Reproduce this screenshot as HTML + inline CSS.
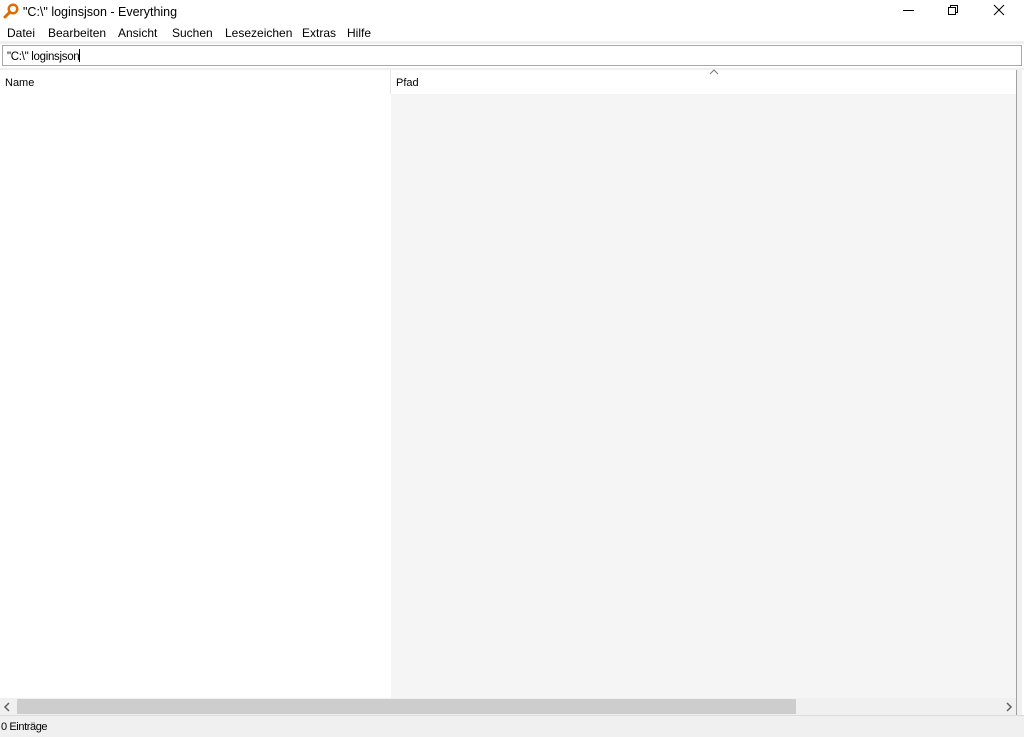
<!DOCTYPE html><html><head><style>
body{margin:0;width:1024px;height:737px;background:#fff;font-family:"Liberation Sans",sans-serif;font-size:12px;color:#000;position:relative;overflow:hidden}
div{position:absolute;box-sizing:border-box}
.t{white-space:nowrap}
.m{top:26px;font-size:12px}
</style></head><body>
<div style="left:0;top:0;width:1024px;height:43px;background:#fff"></div>
<svg style="position:absolute;left:3px;top:3px" width="16" height="16" viewBox="0 0 16 16"><circle cx="10" cy="6" r="4.3" fill="none" stroke="#e06a00" stroke-width="2.4"/><line x1="7" y1="9" x2="2" y2="14" stroke="#e06a00" stroke-width="3" stroke-linecap="round"/></svg>
<div class="t" style="left:23px;top:5px;font-size:12.5px">"C:\" loginsjson - Everything</div>
<svg style="position:absolute;left:900px;top:0" width="124" height="22"><line x1="3" y1="10.5" x2="14" y2="10.5" stroke="#000"/><rect x="48.5" y="7.5" width="7" height="7" fill="none" stroke="#000"/><path d="M50.5 7.5V5.5H57.5V12.5H55.5" fill="none" stroke="#000"/><path d="M94 5L104 15M104 5L94 15" stroke="#000"/></svg>
<div class="t m" style="left:7px">Datei</div>
<div class="t m" style="left:48px">Bearbeiten</div>
<div class="t m" style="left:118px">Ansicht</div>
<div class="t m" style="left:172px">Suchen</div>
<div class="t m" style="left:225px">Lesezeichen</div>
<div class="t m" style="left:302px">Extras</div>
<div class="t m" style="left:347px">Hilfe</div>
<div style="left:0;top:41px;width:1024px;height:3px;background:#f0f0f0"></div>
<div style="left:2px;top:45px;width:1020px;height:21px;border:1px solid #a9a9a9;background:#fff"></div>
<div class="t" style="left:7px;top:49px;font-size:11.5px;letter-spacing:-0.3px">"C:\" loginsjson<span style="display:inline-block;width:1px;height:13px;background:#000;vertical-align:-2px"></span></div>
<div style="left:0;top:68px;width:1024px;height:2px;background:#f0f0f0"></div>
<div style="left:390px;top:70px;width:1px;height:24px;background:#e5e5e5"></div>
<div class="t" style="left:5px;top:77px;font-size:11px">Name</div>
<div class="t" style="left:396px;top:77px;font-size:11px">Pfad</div>
<svg style="position:absolute;left:709px;top:69px" width="10" height="6"><path d="M1 5L5 1L9 5" fill="none" stroke="#777"/></svg>
<div style="left:391px;top:94px;width:625px;height:604px;background:#f5f5f5"></div>
<div style="left:1016px;top:70px;width:8px;height:645px;background:#f0f0f0;border-left:1px solid #a0a0a0;border-right:2px solid #fff"></div>
<div style="left:0;top:698px;width:1016px;height:17px;background:#f0f0f0"></div>
<div style="left:17px;top:699px;width:779px;height:15px;background:#cdcdcd"></div>
<svg style="position:absolute;left:3px;top:701px" width="8" height="12"><path d="M6 2L2 6L6 10" fill="none" stroke="#606060" stroke-width="1.5"/></svg>
<svg style="position:absolute;left:1005px;top:701px" width="8" height="12"><path d="M2 2L6 6L2 10" fill="none" stroke="#606060" stroke-width="1.5"/></svg>
<div style="left:0;top:715px;width:1024px;height:22px;background:#f0f0f0;border-top:1px solid #dcdcdc"></div>
<div class="t" style="left:1px;top:721px;font-size:11px;letter-spacing:-0.4px">0 Einträge</div>
</body></html>
